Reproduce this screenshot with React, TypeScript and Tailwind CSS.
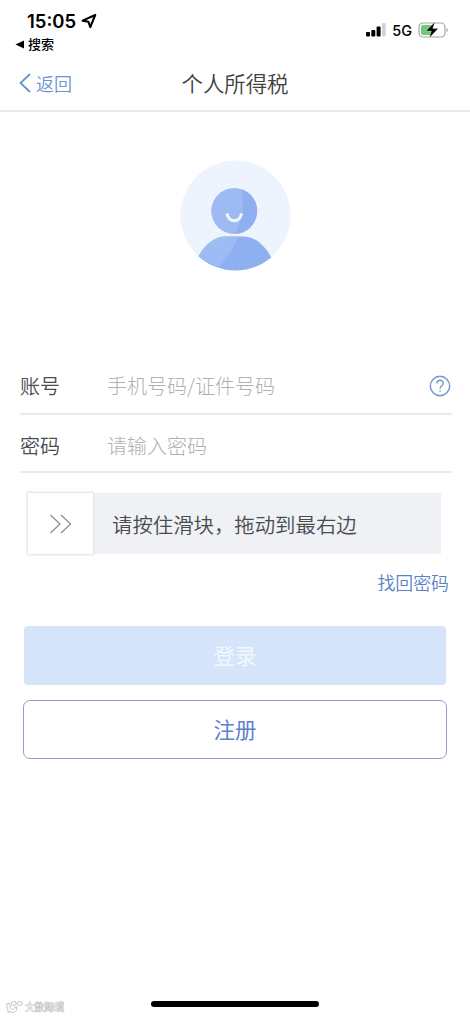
import type { ReactNode } from "react";

const StatusBar = () => (
  <div className="flex h-[55px] justify-between text-black">
    <div className="pt-[10px] font-['Inter','Noto_Sans_CJK_SC',sans-serif]">
      <div className="flex items-center gap-[5px] pl-[27px]">
        <span className="text-[18.5px] leading-[23px] font-semibold">15:05</span>
        <svg className="mb-[2px] h-4 w-4" viewBox="0 0 16 16" fill="none" stroke="currentColor" strokeWidth="2.1" strokeLinejoin="round">
          <path d="M14.2 2 1.600 7.600l5.800 1.100 1.900 5.400z" />
        </svg>
      </div>
      <div className="flex items-center gap-1 pt-[1px] pl-[15px]">
        <svg className="h-[9px] w-[9px]" viewBox="0 0 9 9" fill="currentColor">
          <path d="M9 .5v8L.5 4.5z" />
        </svg>
        <span className="text-[13px] leading-[20px] font-medium">搜索</span>
      </div>
    </div>
    <div className="flex h-[60px] items-center pr-[21px]">
      <svg className="h-[14px] w-[20px]" viewBox="0 0 20 14">
        <rect x="0" y="9" width="4" height="4.5" rx="1" />
        <rect x="5.3" y="7" width="4" height="6.5" rx="1" />
        <rect x="10.6" y="3.5" width="4" height="10" rx="1" />
        <rect x="16" y="0" width="3.8" height="13.5" rx="1" fill="#d4d4d4" />
      </svg>
      <span className="ml-[6px] pt-px font-['Inter',sans-serif] text-[14.5px] leading-5 font-medium">5G</span>
      <svg className="ml-[6px] h-[18px] w-[31px]" viewBox="0 0 31 18">
        <rect x="1" y="2" width="26" height="14" rx="4" fill="#fff" stroke="#a5a5a5" strokeWidth="1.2" />
        <path d="M5 4h9v10H5a2 2 0 0 1-2-2V6a2 2 0 0 1 2-2z" fill="#72c878" />
        <path d="M28.600 7v4c1.800-.6 1.800-3.400 0-4z" fill="#a5a5a5" />
        <path d="M16.800 1 8.200 10h5.200l-2 6.800L20.200 7.600h-5.400z" stroke="#fff" strokeWidth=".3" />
      </svg>
    </div>
  </div>
);

const Header = () => (
  <header className="grid h-[57px] grid-cols-[1fr_auto_1fr] items-center border-b-2 border-[#e9e9e9]">
    <button className="flex items-center gap-[5px] pl-[19px] text-[#6a93cf]">
      <svg className="h-[20px] w-[12px]" viewBox="0 0 12 20" fill="none" stroke="currentColor" strokeWidth="1.8">
        <path d="M11 1 1.5 10 11 19" />
      </svg>
      <span className="text-[18px] leading-6 font-[350]">返回</span>
    </button>
    <h1 className="text-[21.4px] leading-7 font-[350] text-[#404040]">个人所得税</h1>
  </header>
);

const Avatar = () => (
  <svg className="mx-auto mt-[48px] h-[111px] w-[111px]" viewBox="0 0 111 111">
    <defs>
      <clipPath id="disc">
        <circle cx="55.5" cy="55.5" r="55" />
      </clipPath>
      <clipPath id="head">
        <circle cx="54.2" cy="51" r="23" />
      </clipPath>
      <clipPath id="body">
        <path d="M17 99C24 85 34 76.500 46 76.500h17c12 0 22 8.500 29 22.500v13H17z" />
      </clipPath>
      <linearGradient id="shade" x1="0" y1="0" x2="1" y2="1">
        <stop offset="0" stopColor="#a1bff5" />
        <stop offset="1" stopColor="#9ab8f3" />
      </linearGradient>
    </defs>
    <circle cx="55.5" cy="55.5" r="55" fill="#edf4fe" />
    <g clipPath="url(#head)">
      <rect x="30" y="27" width="48" height="48" fill="#9dbaf3" />
      <path d="M61 26h20v50H54c9-15 11-30 7-50z" fill="#8fb0f0" />
    </g>
    <path d="M47 53.500c1.500 9.500 13 9.500 14.500 0" fill="none" stroke="#f4f9ff" strokeWidth="3" />
    <g clipPath="url(#disc)">
      <g clipPath="url(#body)">
        <rect x="16" y="75" width="78" height="37" fill="#8eaff0" />
        <path d="M16 75h43c-4 11-10 20-19 31H16z" fill="url(#shade)" />
      </g>
    </g>
  </svg>
);

const Field = ({ label, placeholder, type, children }: {
  label: string; placeholder: string; type: string; children?: ReactNode;
}) => (
  <label className="flex items-center border-b-2 border-[#ebebeb] text-[20px] leading-7">
    <span className="w-[87px] shrink-0 font-[350] text-[#484d54]">{label}</span>
    <input
      type={type}
      placeholder={placeholder}
      className="min-w-0 flex-1 bg-transparent font-light outline-none placeholder:text-[#b0b0b0]"
    />
    {children}
  </label>
);

const HelpIcon = () => (
  <svg className="mr-[1px] h-[22px] w-[22px]" viewBox="0 0 22 22" fill="none" stroke="#7099c9" strokeWidth="1.4">
    <circle cx="11" cy="11" r="9.700" />
    <path d="M7.900 8.500c0-4.200 6.300-4.200 6.300-.3 0 2.500-3.100 2.500-3.100 5.600" />
    <path d="M11.100 15.200v1.600" />
  </svg>
);

const Slider = () => (
  <div className="mt-[20px] mr-[11px] ml-[8px] flex h-[61px] items-center bg-[#eff1f5]">
    <div className="flex h-[61px] w-[65px] items-center justify-center bg-white shadow-[0_0_2px_1px_#dfdfdf]">
      <svg className="h-[20px] w-[23px]" viewBox="0 0 23 20" fill="none" stroke="#8b8b8b" strokeWidth="1.2">
        <path d="M1.500 1 11 10l-9.500 9M12 1l9.500 9-9.500 9" />
      </svg>
    </div>
    <span className="ml-[19px] text-[20.4px] leading-7 font-[350] text-[#484b50]">请按住滑块，拖动到最右边</span>
  </div>
);

const Watermark = () => (
  <div className="flex items-center gap-[2px] pt-[3px] pl-[6px]">
    <svg className="h-[12px] w-[17px]" viewBox="0 0 17 12" fill="#fff" stroke="#bdbdbd" strokeWidth=".9">
      <path d="M1 2.500h3v3.500c0 3 5 3 5 0h2c0 6-5 6-7 4.500L2 11.500V9C.5 7 .8 4.500 1 2.500z" />
      <rect x="5.500" y=".8" width="4.500" height="3.500" rx="1" />
      <rect x="11.500" y=".8" width="4.500" height="3.500" rx="1" />
    </svg>
    <span className="text-[9.800px] leading-[14px] font-bold text-white [-webkit-text-stroke:0.500px_#b9b9b9]">大数跨境</span>
  </div>
);

export default function App() {
  return (
    <div className="flex h-[1017px] w-[470px] flex-col overflow-hidden bg-white font-['Noto_Sans_CJK_SC',sans-serif]">
      <StatusBar />
      <Header />
      <Avatar />
      <main className="mt-[86px] flex flex-col pr-[18px] pl-[20px]">
        <div className="grid grid-rows-[58px_58px] *:first:pt-[2px] *:last:pt-[5px]">
          <Field label="账号" placeholder="手机号码/证件号码" type="text">
            <HelpIcon />
          </Field>
          <Field label="密码" placeholder="请输入密码" type="password" />
        </div>
        <Slider />
        <a className="mt-[16px] mr-[3px] self-end text-[17.900px] leading-6 font-[350] text-[#5a83c3]">找回密码</a>
        <button className="mt-[32px] mr-[6px] ml-[4px] h-[59px] rounded bg-[#d6e4fa] text-[21.500px] text-[#f2f8ff]">登录</button>
        <button className="mt-[15px] mr-[5px] ml-[3px] h-[59px] rounded-[7px] border border-[#8da2c6] text-[21.500px] text-[#5c81ce]">注册</button>
      </main>
      <footer className="mt-auto grid h-[24px] grid-cols-[151px_168px_1fr]">
        <Watermark />
        <div className="mt-[8px] h-[6px] rounded-full bg-black" />
      </footer>
    </div>
  );
}
